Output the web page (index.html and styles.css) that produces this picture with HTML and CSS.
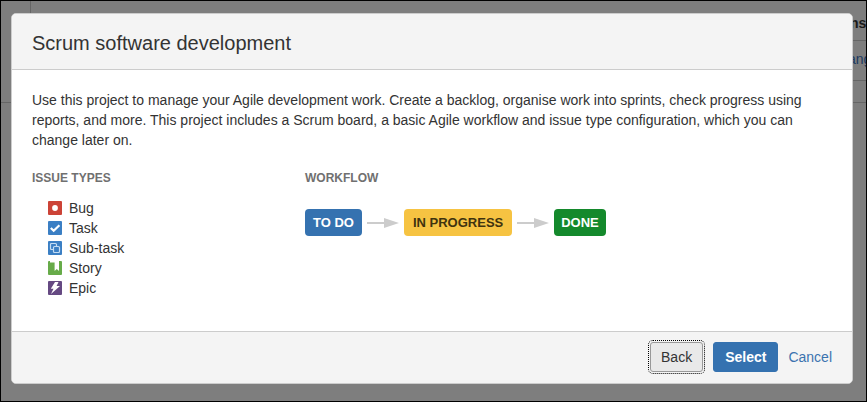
FILE: index.html
```html
<!DOCTYPE html>
<html lang="en">
<head>
<meta charset="utf-8">
<title>Scrum software development</title>
<link rel="stylesheet" href="styles.css">
</head>
<body>
<div class="screen">
  <div class="backdrop" aria-hidden="true">
    <div class="backdrop-left"></div>
    <div class="backdrop-right">
      <div class="backdrop-head">ns</div>
      <div class="backdrop-cell">ang</div>
    </div>
  </div>

  <section class="dialog" role="dialog" aria-labelledby="dialog-title">
    <header class="dialog-header">
      <h1 id="dialog-title">Scrum software development</h1>
    </header>
    <div class="dialog-body">
      <p>Use this project to manage your Agile development work. Create a backlog, organise work into sprints, check progress using reports, and more. This project includes a Scrum board, a basic Agile workflow and issue type configuration, which you can change later on.</p>
      <div class="columns">
        <div>
          <h2>ISSUE TYPES</h2>
          <ul class="types">
            <li><svg viewBox="0 0 14 14"><rect width="14" height="14" rx="1" fill="#cc4337"/><circle cx="7" cy="7" r="2.9" fill="#fff"/></svg>Bug</li>
            <li><svg viewBox="0 0 14 14"><rect width="14" height="14" rx="1" fill="#3b7fc4"/><path d="M2.8 7 5.7 9.8 11.4 4.2" fill="none" stroke="#fff" stroke-width="2.2"/></svg>Task</li>
            <li><svg viewBox="0 0 14 14"><rect width="14" height="14" rx="1" fill="#3b7fc4"/><path d="M5 8.5H3.5a1 1 0 0 1-1-1v-4a1 1 0 0 1 1-1h4a1 1 0 0 1 1 1V5" fill="none" stroke="#c4dcf3" stroke-width="1.2"/><rect x="5.5" y="5.5" width="6" height="6" rx="1" fill="none" stroke="#c4dcf3" stroke-width="1.2"/></svg>Sub-task</li>
            <li><svg viewBox="0 0 14 14"><rect width="14" height="14" rx="1" fill="#67ab49"/><path d="M2 0H11V10L8.8 8 6.6 10V1.5H2Z" fill="#fff"/></svg>Story</li>
            <li><svg viewBox="0 0 14 14"><rect width="14" height="14" rx="1" fill="#654982"/><path d="M7 1H10.5L8.6 5H12L3 13 5.5 7.8H2.8Z" fill="#fff"/></svg>Epic</li>
          </ul>
        </div>
        <div>
          <h2>WORKFLOW</h2>
          <div class="workflow">
            <span class="status todo">TO DO</span>
            <svg class="arrow" viewBox="0 0 32 10"><path d="M0 4H17V0L32 5 17 10V6H0Z" fill="#ccc"/></svg>
            <span class="status progress">IN PROGRESS</span>
            <svg class="arrow" viewBox="0 0 32 10"><path d="M0 4H17V0L32 5 17 10V6H0Z" fill="#ccc"/></svg>
            <span class="status done">DONE</span>
          </div>
        </div>
      </div>
    </div>
    <footer class="dialog-footer">
      <button class="button back" type="button">Back</button>
      <button class="button select" type="button">Select</button>
      <a class="cancel" href="#">Cancel</a>
    </footer>
  </section>
</div>
</body>
</html>
```
FILE: styles.css
```css
* {
  box-sizing: border-box;
}

body {
  margin: 0;
  background: #7e7e7e;
  color: #333;
  font: 14px/20px Arial, "Liberation Sans", sans-serif;
}

.screen {
  position: relative;
  display: flex;
  min-height: 100vh;
  padding: 12px 13px 17px 10px;
  border: 1px solid #000;
  overflow: hidden;
}

.backdrop {
  position: absolute;
  inset: 0;
  display: flex;
  justify-content: space-between;
  height: 102px;
  border-bottom: 1px solid #666;
}

.backdrop-left {
  width: 30px;
  border-right: 1px solid #666;
}

.backdrop-right {
  width: 18px;
}

.backdrop-head,
.backdrop-cell {
  height: 40px;
  border-bottom: 1px solid #666;
}

.backdrop-head {
  padding: 12px 0 0 2px;
  color: #1a1a1a;
  font-weight: bold;
}

.backdrop-cell {
  padding-top: 8px;
  color: #1d3960;
}

.dialog {
  position: relative;
  display: flex;
  flex: 1;
  flex-direction: column;
  border: 1px solid #ccc;
  border-radius: 5px;
  background: #fff;
  overflow: hidden;
}

.dialog-header {
  padding: 17px 20px 13px;
  border-bottom: 1px solid #ccc;
  background: #f4f4f4;
}

h1 {
  margin: 0;
  font-size: 20px;
  font-weight: normal;
  line-height: 25px;
}

.dialog-body {
  flex: 1;
  padding: 20px;
}

p {
  margin: 0 0 18px;
}

.columns {
  display: grid;
  grid-template-columns: 273px 1fr;
}

h2 {
  margin: 0;
  color: #707070;
  font-size: 12px;
  line-height: 20px;
}

.types {
  margin: 10px 0 0;
  padding: 0 0 0 16px;
  list-style: none;
}

.types li {
  display: flex;
  align-items: center;
  gap: 7px;
}

.types svg {
  width: 14px;
  height: 14px;
}

.workflow {
  display: flex;
  align-items: center;
  gap: 5px;
  margin-top: 21px;
}

.status {
  padding: 0 8px;
  border-radius: 4px;
  color: #fff;
  font-size: 13px;
  font-weight: bold;
  line-height: 27px;
}

.todo {
  background: #3572b0;
}

.progress {
  padding: 0 9px;
  background: #f6c342;
  color: #40330f;
}

.done {
  padding: 0 7px;
  background: #14892c;
}

.arrow {
  width: 32px;
  height: 10px;
}

.dialog-footer {
  display: flex;
  align-items: center;
  justify-content: flex-end;
  gap: 10px;
  padding: 10px 20px 11px;
  border-top: 1px solid #ccc;
  background: #f4f4f4;
}

.button {
  height: 30px;
  border: 1px solid #999;
  border-radius: 3px;
  color: #333;
  font: inherit;
}

.back {
  padding: 0 10px;
  background: #e9e9e9;
  outline: 1px dotted #000;
  outline-offset: 1px;
}

.select {
  padding: 0 11px;
  border-color: #3572b0;
  background: #3572b0;
  color: #fff;
  font-weight: bold;
}

.cancel {
  color: #3b73af;
  text-decoration: none;
}
```
